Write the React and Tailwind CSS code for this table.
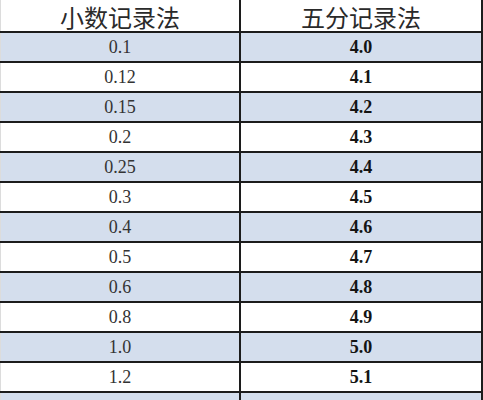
import React from "react";

const rows = [
  ["0.1", "4.0"],
  ["0.12", "4.1"],
  ["0.15", "4.2"],
  ["0.2", "4.3"],
  ["0.25", "4.4"],
  ["0.3", "4.5"],
  ["0.4", "4.6"],
  ["0.5", "4.7"],
  ["0.6", "4.8"],
  ["0.8", "4.9"],
  ["1.0", "5.0"],
  ["1.2", "5.1"],
  ["1.5", "5.2"],
];

export default function App() {
  return (
    <div className="w-[483px] h-[400px] overflow-hidden bg-white">
      <div className="flex flex-col">
        <div className="flex h-[33px] border-b-2 border-[#1c1c1c] bg-white">
          <div className="w-[241px] border-l border-[#dcdcdc] border-r-2 border-r-[#1c1c1c] flex items-center justify-center pt-[2px] text-[24px] leading-none text-[#2a2a2a] font-['Noto_Sans_CJK_SC',sans-serif]">
            小数记录法
          </div>
          <div className="flex-1 border-r-2 border-[#1c1c1c] flex items-center justify-center pt-[2px] text-[24px] leading-none text-[#2a2a2a] font-['Noto_Sans_CJK_SC',sans-serif]">
            五分记录法
          </div>
        </div>
        {rows.map(([a, b], i) => (
          <div
            key={a}
            className={
              i % 2 === 0
                ? "flex h-[30px] shrink-0 border-b-2 border-[#1c1c1c] bg-[#d4deed]"
                : "flex h-[30px] shrink-0 border-b-2 border-[#1c1c1c] bg-white"
            }
          >
            <div className="w-[241px] border-l border-[#dcdcdc] border-r-2 border-r-[#1c1c1c] flex items-center justify-center text-[18px] leading-none text-[#333333] font-['Liberation_Serif',serif]">
              {a}
            </div>
            <div className="flex-1 border-r-2 border-[#1c1c1c] flex items-center justify-center text-[18px] leading-none font-bold text-[#141414] font-['Liberation_Serif',serif]">
              {b}
            </div>
          </div>
        ))}
      </div>
    </div>
  );
}
